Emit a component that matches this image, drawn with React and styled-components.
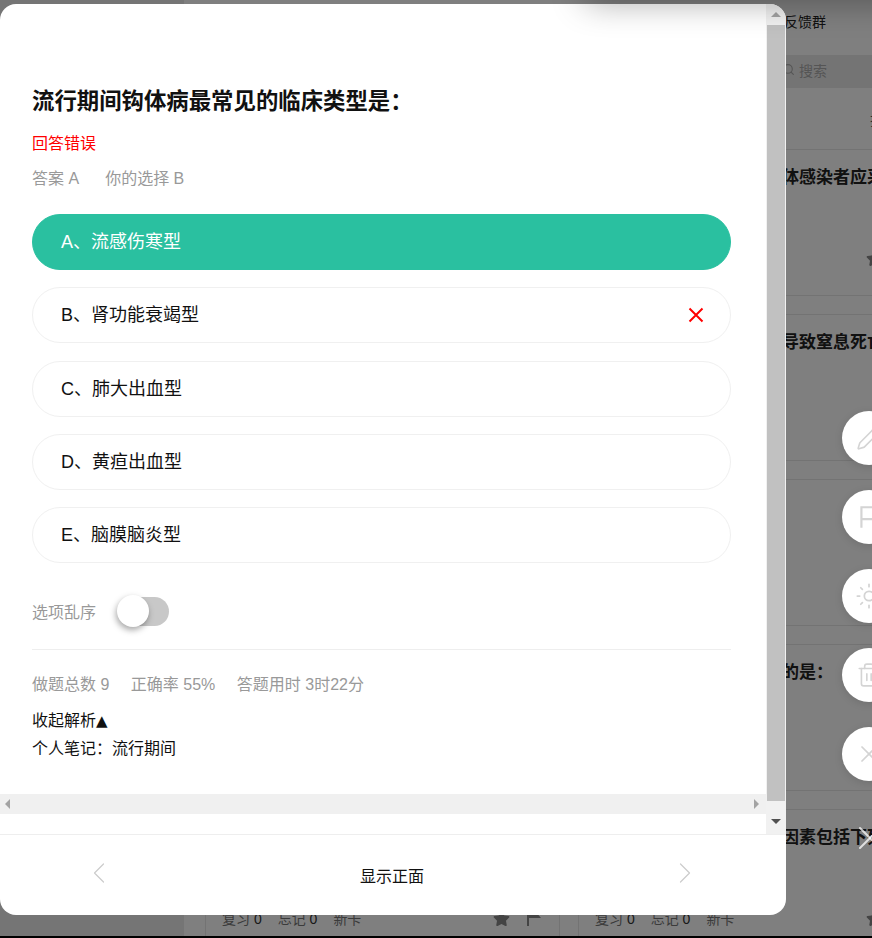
import React from 'react';
import styled, { createGlobalStyle } from 'styled-components';
import { Search, Pencil, Sun, Trash2, X, ChevronLeft, ChevronRight } from 'lucide-react';
import { FaStar } from 'react-icons/fa';

const GlobalStyle = createGlobalStyle`
html, body {
    margin: 0;
    padding: 0;
    background: #000;
}
body {
    font-family: "Liberation Sans", "Noto Sans CJK SC", sans-serif;
}
`;

const Stage = styled.div`
position: relative;
width: 872px;
height: 936px;
overflow: hidden;
display: flex;
background: #fff;
`;

const Sidebar = styled.div`
width: 184px;
flex-shrink: 0;
background: #eaeaea;
`;

const Main = styled.div`
flex: 1;
min-width: 0;
display: flex;
flex-direction: column;
`;

const TopBar = styled.div`
height: 55px;
flex-shrink: 0;
box-sizing: border-box;
padding: 12px 46px 0 0;
display: flex;
justify-content: flex-end;
font-size: 14px;
line-height: 20px;
color: #222;
`;

const SearchBar = styled.div`
height: 33px;
flex-shrink: 0;
box-sizing: border-box;
background: #e8e8e8;
padding: 0 45px 4px 0;
display: flex;
justify-content: flex-end;
align-items: center;
gap: 4px;
font-size: 14px;
color: #aaa;
`;

const SortBar = styled.div`
height: 61px;
flex-shrink: 0;
display: flex;
justify-content: flex-end;
align-items: center;
margin-right: -26px;
font-size: 14px;
color: #555;
`;

const CardGrid = styled.div`
display: grid;
grid-template-columns: 355px 355px;
grid-auto-rows: 147px;
gap: 18px;
padding-left: 21px;
`;

const Card = styled.div`
box-sizing: border-box;
border: 1px solid #e6e6e6;
padding: 16px 18px 27px 16px;
display: flex;
flex-direction: column;
overflow: hidden;
`;

const CardTitle = styled.div`
font-size: 17px;
line-height: 24px;
font-weight: 700;
color: #222;
white-space: nowrap;
`;

const CardFoot = styled.div`
margin-top: auto;
height: 20px;
display: flex;
align-items: center;
justify-content: space-between;
font-size: 14px;
color: #777;
`;

const Counts = styled.div`
display: flex;
gap: 16px;

b {
    font-weight: 400;
    color: #333;
}
`;

const Marks = styled.div`
display: flex;
align-items: center;
gap: 17px;
color: #888;
`;

const Overlay = styled.div`
position: absolute;
inset: 0;
background: rgba(0, 0, 0, 0.5);
`;

const CloseMark = styled.div`
position: absolute;
left: 850px;
top: 818px;
color: rgba(255, 255, 255, 0.75);
display: flex;
`;

const FloatColumn = styled.div`
position: absolute;
left: 842px;
top: 411px;
display: flex;
flex-direction: column;
gap: 25px;
`;

const FloatButton = styled.div`
width: 54px;
height: 54px;
border-radius: 50%;
background: #fff;
box-shadow: 0 2px 8px rgba(0, 0, 0, 0.12);
display: flex;
align-items: center;
justify-content: center;
color: #d4d4d4;
`;

const Modal = styled.div`
position: absolute;
left: 0;
top: 4px;
width: 786px;
height: 911px;
background: #fff;
border-radius: 16px;
overflow: hidden;
display: flex;
flex-direction: column;
`;

const ScrollFrame = styled.div`
height: 830px;
flex-shrink: 0;
display: flex;
`;

const ScrollPane = styled.div`
width: 766px;
flex-shrink: 0;
display: flex;
flex-direction: column;
`;

const Content = styled.div`
height: 790px;
box-sizing: border-box;
padding: 83px 35px 0 32px;
overflow: hidden;
`;

const Question = styled.h2`
margin: 0;
font-size: 22.4px;
line-height: 30px;
font-weight: 700;
color: #111;
`;

const Verdict = styled.div`
margin-top: 15px;
font-size: 16px;
line-height: 24px;
color: #f00;
`;

const InfoRow = styled.div`
margin-top: ${(p) => p.$top}px;
display: flex;
gap: ${(p) => p.$gap}px;
font-size: 16px;
line-height: 24px;
color: #999;
`;

const Options = styled.div`
margin-top: 23px;
display: flex;
flex-direction: column;
gap: 17.3px;
`;

const Option = styled.div`
height: 56px;
box-sizing: border-box;
padding: 0 26px 4px 28px;
display: flex;
align-items: center;
justify-content: space-between;
border-radius: 28px;
font-size: 18px;
border: 1px solid ${(p) => (p.$correct ? '#2ac0a0' : '#f0f0f0')};
background: ${(p) => (p.$correct ? '#2ac0a0' : '#fff')};
color: ${(p) => (p.$correct ? '#fff' : '#111')};
`;

const ShuffleRow = styled.div`
margin-top: 32px;
height: 32px;
display: flex;
align-items: center;
gap: 22px;
font-size: 16px;
color: #999;
`;

const Toggle = styled.div`
position: relative;
width: 51px;
height: 29px;
border-radius: 15px;
background: #c8c8c8;
`;

const Knob = styled.div`
position: absolute;
left: -1px;
top: -2px;
width: 32px;
height: 32px;
border-radius: 50%;
background: #fff;
box-shadow: -1px 3px 6px rgba(0, 0, 0, 0.35);
`;

const Divider = styled.div`
margin-top: 22px;
height: 1px;
background: #eee;
`;

const Analysis = styled.div`
margin-top: 10px;
font-size: 16px;
line-height: 27px;
color: #111;
`;

const Caret = styled.span`
font-family: "DejaVu Sans", sans-serif;
font-size: 15px;
`;

const HBar = styled.div`
height: 20px;
flex-shrink: 0;
background: #f0f0f0;
padding: 0 7px 0 5px;
display: flex;
align-items: center;
justify-content: space-between;
`;

const VBar = styled.div`
width: 20px;
flex-shrink: 0;
background: #f1f1f1;
display: flex;
flex-direction: column;
`;

const VButton = styled.div`
height: ${(p) => p.$height}px;
flex-shrink: 0;
display: flex;
justify-content: center;
padding-top: ${(p) => p.$pad}px;
box-sizing: border-box;
`;

const Thumb = styled.div`
flex: 1;
margin: 0 1px;
background: #c1c1c1;
`;

const Arrow = styled.span`
width: 0;
height: 0;
border-style: solid;
border-color: transparent;
${(p) => p.$dir === 'up' && `border-width: 0 5px 5px; border-bottom-color: #a3a3a3;`}
${(p) => p.$dir === 'down' && `border-width: 5px 5px 0; border-top-color: #505050;`}
${(p) => p.$dir === 'left' && `border-width: 5px 5px 5px 0; border-right-color: #a3a3a3;`}
${(p) => p.$dir === 'right' && `border-width: 5px 0 5px 5px; border-left-color: #a3a3a3;`}
`;

const Footer = styled.div`
flex: 1;
border-top: 1px solid #eee;
padding: 0 83px 4px 81px;
display: flex;
align-items: center;
justify-content: space-between;
color: #ccc;
`;

const FlipButton = styled.div`
margin-top: 3px;
font-size: 16px;
color: #111;
`;

const TopShadow = styled.div`
position: absolute;
left: 586px;
top: -24px;
width: 400px;
height: 24px;
box-shadow: 0 0 34px rgba(0, 0, 0, 0.42);
`;

const cards = [
    ['钩体病的主要传染源是：', '在流行期间对于钩端螺旋体感染者应采取'],
    ['钩体病的传播途径是：', '钩体病患者常因肺大出血导致窒息死亡'],
    ['钩体病的潜伏期一般是：', '钩体病的传播途径是：'],
    ['钩体病的首选药物是：', '关于钩体病治疗描述正确的是：'],
    ['钩体病的预防措施是：', '影响钩体病疫情流行的各因素包括下列'],
];

const options = [
    { text: 'A、流感伤寒型', correct: true },
    { text: 'B、肾功能衰竭型', wrong: true },
    { text: 'C、肺大出血型' },
    { text: 'D、黄疸出血型' },
    { text: 'E、脑膜脑炎型' },
];

function FlagIcon({ size, color }) {
    return (
        <svg width={size} height={size} viewBox="0 0 24 24" fill="none" stroke={color} strokeWidth="2">
            <path d="M5 22V3h14v11H5" />
        </svg>
    );
}

function FlagSolid() {
    return (
        <svg width="14" height="16" viewBox="0 0 14 16" fill="currentColor">
            <path d="M0 0h2v16H0zM2 1h12l-3 3.5L14 8H2z" />
        </svg>
    );
}

const WrongIcon = styled.svg`
margin-top: 4px;
`;

function WrongMark() {
    return (
        <WrongIcon width="16" height="16" viewBox="0 0 16 16" fill="none" stroke="#f00" strokeWidth="2">
            <path d="M1.5 1.5l13 13M14.5 1.5l-13 13" />
        </WrongIcon>
    );
}

function ReviewCard({ title }) {
    return (
        <Card>
            <CardTitle>{title}</CardTitle>
            <CardFoot>
                <Counts>
                    <span>复习 <b>0</b></span>
                    <span>忘记 <b>0</b></span>
                    <span>新卡</span>
                </Counts>
                <Marks>
                    <FaStar size={17} />
                    <FlagSolid />
                </Marks>
            </CardFoot>
        </Card>
    );
}

export default function App() {
    return (
        <>
            <GlobalStyle />
            <Stage>
                <Sidebar />
                <Main>
                    <TopBar>意见反馈群</TopBar>
                    <SearchBar>
                        <Search size={13} />
                        搜索
                    </SearchBar>
                    <SortBar>排序</SortBar>
                    <CardGrid>
                        {cards.flat().map((title, i) => (
                            <ReviewCard key={i} title={title} />
                        ))}
                    </CardGrid>
                </Main>
                <Overlay />
                <CloseMark>
                    <X size={40} strokeWidth={1.2} />
                </CloseMark>
                <FloatColumn>
                    <FloatButton><Pencil size={26} strokeWidth={1.5} /></FloatButton>
                    <FloatButton><FlagIcon size={26} color="#d4d4d4" /></FloatButton>
                    <FloatButton><Sun size={28} strokeWidth={1.5} /></FloatButton>
                    <FloatButton><Trash2 size={26} strokeWidth={1.5} /></FloatButton>
                    <FloatButton><X size={28} strokeWidth={1.5} /></FloatButton>
                </FloatColumn>
                <Modal>
                    <ScrollFrame>
                        <ScrollPane>
                            <Content>
                                <Question>流行期间钩体病最常见的临床类型是：</Question>
                                <Verdict>回答错误</Verdict>
                                <InfoRow $top={11} $gap={26}>
                                    <span>答案 A</span>
                                    <span>你的选择 B</span>
                                </InfoRow>
                                <Options>
                                    {options.map((o) => (
                                        <Option key={o.text} $correct={o.correct}>
                                            {o.text}
                                            {o.wrong && <WrongMark />}
                                        </Option>
                                    ))}
                                </Options>
                                <ShuffleRow>
                                    选项乱序
                                    <Toggle><Knob /></Toggle>
                                </ShuffleRow>
                                <Divider />
                                <InfoRow $top={23} $gap={21.5}>
                                    <span>做题总数 9</span>
                                    <span>正确率 55%</span>
                                    <span>答题用时 3时22分</span>
                                </InfoRow>
                                <Analysis>
                                    <div>收起解析<Caret>▲</Caret></div>
                                    <div>个人笔记：流行期间</div>
                                </Analysis>
                            </Content>
                            <HBar>
                                <Arrow $dir="left" />
                                <Arrow $dir="right" />
                            </HBar>
                        </ScrollPane>
                        <VBar>
                            <VButton $height={21} $pad={8}><Arrow $dir="up" /></VButton>
                            <Thumb />
                            <VButton $height={33} $pad={18}><Arrow $dir="down" /></VButton>
                        </VBar>
                    </ScrollFrame>
                    <Footer>
                        <ChevronLeft size={36} strokeWidth={0.8} />
                        <FlipButton>显示正面</FlipButton>
                        <ChevronRight size={36} strokeWidth={0.8} />
                    </Footer>
                </Modal>
                <TopShadow />
            </Stage>
        </>
    );
}
